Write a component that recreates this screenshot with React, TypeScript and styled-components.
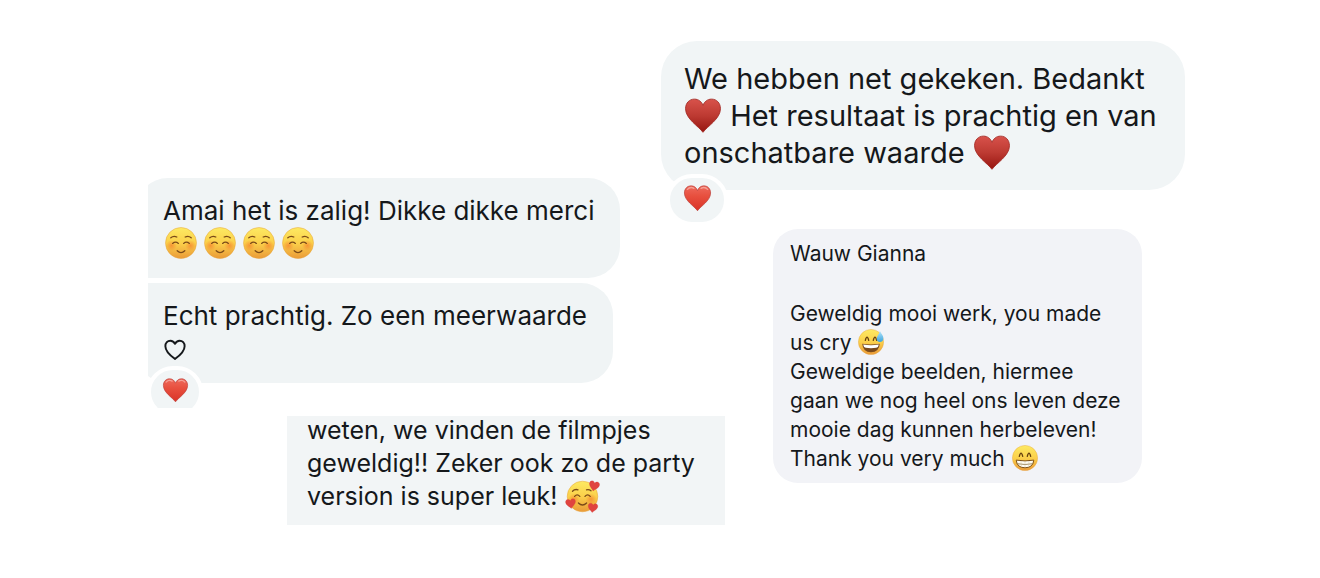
import React from "react";
import styled, { createGlobalStyle } from "styled-components";

const GlobalStyle = createGlobalStyle`
  *, *::before, *::after { box-sizing: border-box; }
  body {
    margin: 0;
    background: #ffffff;
    color: #15181b;
    font-family: Inter, "Liberation Sans", sans-serif;
  }
`;

const Page = styled.main`
  display: grid;
  grid-template-columns: minmax(0, 513fr) minmax(0, 64fr) minmax(0, 460fr);
  align-items: start;
  padding: 41px 135px 52px 148px;
`;

const LeftColumn = styled.div`
  grid-column: 1 / 3;
  grid-row: 1;
  display: flex;
  flex-direction: column;
  gap: 8px;
  padding-top: 137px;
`;

const RightColumn = styled.div`
  grid-column: 2 / 4;
  grid-row: 1;
  display: flex;
  flex-direction: column;
  gap: 39px;
`;

/* Cuts the thread off along its left side and under the last reaction. */
const ThreadCrop = styled.section`
  overflow: hidden;
  display: flex;
  flex-direction: column;
  align-items: flex-start;
  gap: 5px;
  padding-bottom: 25px;
`;

const ThreadBubble = styled.article<{ $last?: boolean }>`
  position: relative;
  min-height: 100px;
  margin-left: -12px;
  padding: 16px 26px 16px 27px;
  background: #f0f4f5;
  border-radius: ${(p) => (p.$last ? "4px 32px 32px 32px" : "32px 32px 32px 4px")};
`;

const WideBubble = styled.article`
  position: relative;
  padding: 19px 24px 19px 23px;
  background: #f1f5f6;
  border-radius: 36px;
`;

const NoteBubble = styled.article`
  align-self: flex-end;
  display: flex;
  flex-direction: column;
  gap: 31px;
  width: 369px;
  margin-right: 43px;
  padding: 10px 16px 10px 17px;
  background: #f2f3f7;
  border-radius: 25px;
`;

/* The text starts right at the cut upper edge. */
const Excerpt = styled.article`
  align-self: flex-end;
  width: 438px;
  padding: 0 20px 12px;
  margin-top: 0;
  background: #f2f5f6;

  > p {
    margin-top: -2px;
  }
`;

const Message = styled.p<{ $size: number; $line: number }>`
  margin: 0;
  font-size: ${(p) => p.$size}px;
  line-height: ${(p) => p.$line}px;
  white-space: nowrap;
`;

const Line = styled.span`
  display: block;
`;

const FaceRow = styled.span`
  display: flex;
  align-items: center;
  gap: 5px;
  height: 34px;
  padding-left: 1px;
`;

const Emoji = styled.svg<{ $size: number }>`
  display: inline-block;
  flex: none;
  width: ${(p) => p.$size}px;
  height: ${(p) => p.$size}px;
  margin: -8px 1px -4px;
  vertical-align: middle;
  overflow: visible;
`;

const Reaction = styled.span<{ $wide?: boolean }>`
  position: absolute;
  left: ${(p) => (p.$wide ? 5 : 11)}px;
  bottom: ${(p) => (p.$wide ? -36 : -35)}px;
  display: flex;
  align-items: center;
  justify-content: center;
  width: ${(p) => (p.$wide ? 62 : 56)}px;
  height: 52px;
  border: 4px solid #ffffff;
  border-radius: 26px;
  background: #f1f5f6;
`;

const heartPath =
  "M16 30.5C12 25 .5 18.5 .5 9.5C.5 4.3 4 1 8.4 1C12 1 14.8 3.2 16 6.6C17.2 3.2 20 1 23.6 1C28 1 31.5 4.3 31.5 9.5C31.5 18.5 20 25 16 30.5Z";

function Gradients() {
  return (
    <svg width="0" height="0" style={{ position: "absolute" }} aria-hidden="true">
      <defs>
        <linearGradient id="face" x1="0" y1="0" x2="0" y2="1">
          <stop offset="0" stopColor="#fdea62" />
          <stop offset="0.5" stopColor="#fbd04a" />
          <stop offset="1" stopColor="#ea9a38" />
        </linearGradient>
        <radialGradient id="blush">
          <stop offset="0" stopColor="#f47b2c" stopOpacity="0.65" />
          <stop offset="1" stopColor="#f47b2c" stopOpacity="0" />
        </radialGradient>
        <linearGradient id="suit" x1="0" y1="0" x2="0" y2="1">
          <stop offset="0" stopColor="#d8524b" />
          <stop offset="0.5" stopColor="#bd3a32" />
          <stop offset="1" stopColor="#961510" />
        </linearGradient>
        <linearGradient id="red" x1="0" y1="0" x2="0" y2="1">
          <stop offset="0" stopColor="#ee6a5c" />
          <stop offset="0.4" stopColor="#e8503f" />
          <stop offset="1" stopColor="#d93327" />
        </linearGradient>
        <linearGradient id="drop" x1="0" y1="0" x2="0" y2="1">
          <stop offset="0" stopColor="#b5e4f8" />
          <stop offset="1" stopColor="#3aa4df" />
        </linearGradient>
      </defs>
    </svg>
  );
}

function Heart({ size, tone }: { size: number; tone: "suit" | "red" }) {
  return (
    <Emoji $size={size} viewBox="0 0 32 32" role="img" aria-label="hart">
      <path
        d={heartPath}
        fill={`url(#${tone})`}
        stroke={tone === "suit" ? "#a52c27" : "#b93a34"}
        strokeWidth="0.8"
      />
      {tone === "red" && (
        <g fill="none" stroke="#f8b0a6" strokeWidth="1.6" strokeLinecap="round" opacity="0.8">
          <path d="M4 5.2Q7.5 1.6 11.8 4" />
          <path d="M20.2 4Q24.5 1.6 28 5.2" />
        </g>
      )}
    </Emoji>
  );
}

function OutlineHeart() {
  return (
    <Emoji $size={22} viewBox="0 0 32 32" role="img" aria-label="hartje">
      <path
        d="M16 29C10.5 25 2 19 2 10.5C2 5.6 5.2 2.5 9.2 2.5C12.2 2.5 14.6 4.2 16 7C17.4 4.2 19.8 2.5 22.8 2.5C26.8 2.5 30 5.6 30 10.5C30 19 21.5 25 16 29Z"
        fill="none"
        stroke="#15181b"
        strokeWidth="2.8"
        strokeLinejoin="round"
      />
    </Emoji>
  );
}

function FaceBase() {
  return <circle cx="16" cy="16" r="15.5" fill="url(#face)" stroke="#e7a43c" strokeWidth="0.5" />;
}

function SmilingFace() {
  return (
    <Emoji $size={32} viewBox="0 0 32 32" role="img" aria-label="glimlach">
      <FaceBase />
      <circle cx="6.5" cy="18.5" r="5.5" fill="url(#blush)" />
      <circle cx="25.5" cy="18.5" r="5.5" fill="url(#blush)" />
      <g fill="none" stroke="#7a4a18" strokeWidth="1.3" strokeLinecap="round">
        <path d="M5.8 10.8Q8.5 8.4 11.8 10" />
        <path d="M20.2 10Q23.5 8.4 26.2 10.8" />
        <path d="M7.6 16.4Q10.6 14 13.4 16.4" />
        <path d="M18.6 16.4Q21.4 14 24.4 16.4" />
        <path d="M12.2 23.8Q16 27.6 19.8 23.8" />
      </g>
    </Emoji>
  );
}

function LovingFace() {
  return (
    <Emoji $size={34} viewBox="0 0 34 34" role="img" aria-label="verliefd">
      <circle cx="16.5" cy="17.5" r="15.3" fill="url(#face)" stroke="#e7a43c" strokeWidth="0.5" />
      <circle cx="8" cy="20" r="5.5" fill="url(#blush)" />
      <circle cx="25" cy="20" r="5.5" fill="url(#blush)" />
      <g fill="none" stroke="#7a4a18" strokeWidth="1.3" strokeLinecap="round">
        <path d="M6.5 12.2Q8.8 9.8 12 10.8" />
        <path d="M20.5 10.8Q23 10 25 11.8" />
        <path d="M8.6 17.4Q11.2 14.4 13.8 17.4" />
        <path d="M19 17.4Q21.6 14.4 24.2 17.4" />
        <path d="M12.4 24Q16.5 28 20.6 24" />
      </g>
      <g fill="#e0443f" stroke="#c9302f" strokeWidth="0.6">
        <path transform="translate(24 1) rotate(12) scale(.33)" d={heartPath} />
        <path transform="translate(-1 20.5) rotate(-8) scale(.32)" d={heartPath} />
        <path transform="translate(22.5 23.5) rotate(8) scale(.31)" d={heartPath} />
      </g>
    </Emoji>
  );
}

function GrinningFace({ sweat, teeth }: { sweat?: boolean; teeth?: boolean }) {
  return (
    <Emoji $size={26} viewBox="0 0 32 32" role="img" aria-label={sweat ? "lach met zweetdruppel" : "grijns"}>
      <FaceBase />
      <g fill="none" stroke="#65400f" strokeWidth="1.6" strokeLinecap="round">
        <path d="M9 14Q10 10 11.1 10Q12.2 10 13.2 14" />
        <path d="M18.8 14Q19.8 10 20.9 10Q22 10 23 14" />
      </g>
      {teeth ? (
        <>
          <path
            d="M5.2 18.6Q16 20.6 26.8 18.6Q26 28 16 28Q6 28 5.2 18.6Z"
            fill="#fffdf5"
            stroke="#7a4d14"
            strokeWidth="1.2"
          />
          <path d="M6.4 23Q16 25 25.6 23" fill="none" stroke="#8d7445" strokeWidth="1" />
          <path
            d="M11 19.8L11.6 27M16 20L16 28M21 19.8L20.4 27"
            fill="none"
            stroke="#cfc19c"
            strokeWidth="0.6"
          />
        </>
      ) : (
        <>
          <path d="M5.2 18Q16 20 26.8 18Q26 28.5 16 28.5Q6 28.5 5.2 18Z" fill="#7a4a1c" />
          <path d="M6.4 19Q16 20.8 25.6 19Q25.2 22.8 22.5 23.2Q16 24.2 9.5 23.2Q6.8 22.8 6.4 19Z" fill="#ffffff" />
        </>
      )}
      {sweat && (
        <path
          d="M27 2.5C28.5 6 31.5 8.2 31.2 12C31 14.6 29.2 16 27 16C24.6 16 22.9 14.3 23 12C23.2 8.6 26 6.6 27 2.5Z"
          fill="url(#drop)"
        />
      )}
    </Emoji>
  );
}

export default function App() {
  return (
    <>
      <GlobalStyle />
      <Gradients />
      <Page>
        <LeftColumn>
          <ThreadCrop>
            <ThreadBubble>
              <Message $size={26} $line={34}>
                <Line>Amai het is zalig! Dikke dikke merci</Line>
                <FaceRow>
                  <SmilingFace />
                  <SmilingFace />
                  <SmilingFace />
                  <SmilingFace />
                </FaceRow>
              </Message>
            </ThreadBubble>
            <ThreadBubble $last>
              <Message $size={26} $line={34}>
                <Line>Echt prachtig. Zo een meerwaarde</Line>
                <Line>
                  <OutlineHeart />
                </Line>
              </Message>
              <Reaction>
                <Heart size={25} tone="red" />
              </Reaction>
            </ThreadBubble>
          </ThreadCrop>
          <Excerpt>
            <Message $size={25} $line={33}>
              <Line>weten, we vinden de filmpjes</Line>
              <Line>geweldig!! Zeker ook zo de party</Line>
              <Line>
                version is super leuk! <LovingFace />
              </Line>
            </Message>
          </Excerpt>
        </LeftColumn>
        <RightColumn>
          <WideBubble>
            <Message $size={29} $line={37}>
              <Line>We hebben net gekeken. Bedankt</Line>
              <Line>
                <Heart size={36} tone="suit" /> Het resultaat is prachtig en van
              </Line>
              <Line>
                onschatbare waarde <Heart size={36} tone="suit" />
              </Line>
            </Message>
            <Reaction $wide>
              <Heart size={27} tone="red" />
            </Reaction>
          </WideBubble>
          <NoteBubble>
            <Message $size={21} $line={29}>
              Wauw Gianna
            </Message>
            <Message $size={21} $line={29}>
              <Line>Geweldig mooi werk, you made</Line>
              <Line>
                us cry <GrinningFace sweat />
              </Line>
              <Line>Geweldige beelden, hiermee</Line>
              <Line>gaan we nog heel ons leven deze</Line>
              <Line>mooie dag kunnen herbeleven!</Line>
              <Line>
                Thank you very much <GrinningFace teeth />
              </Line>
            </Message>
          </NoteBubble>
        </RightColumn>
      </Page>
    </>
  );
}
